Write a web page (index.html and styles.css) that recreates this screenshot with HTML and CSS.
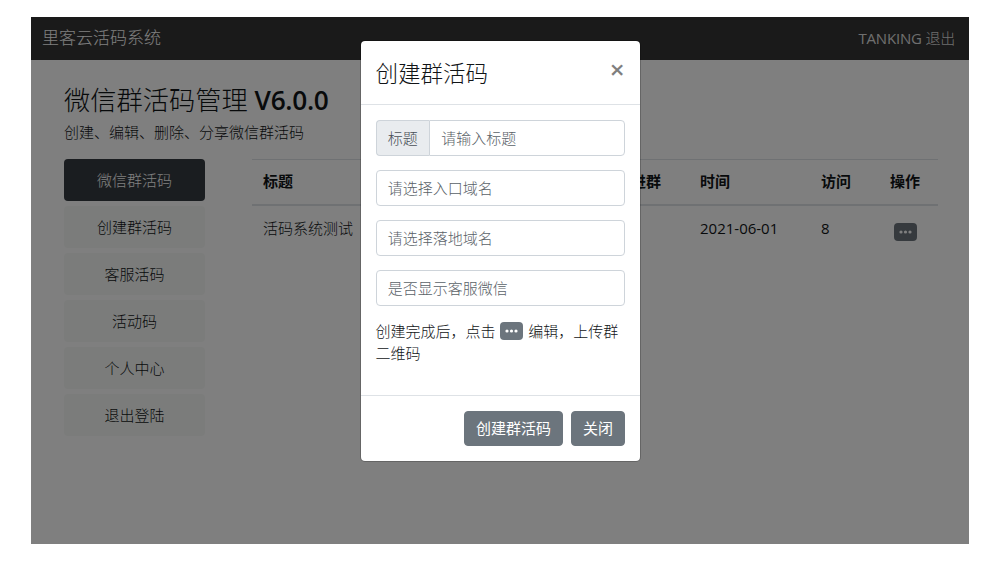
FILE: index.html
```html
<!DOCTYPE html>
<html lang="zh-CN">
<head>
<meta charset="utf-8">
<title>里客云活码系统</title>
<link rel="stylesheet" href="styles.css">
</head>
<body>
<div class="app">
  <nav class="navbar">
    <span class="brand">里客云活码系统</span>
    <span class="user"><span class="latin">TANKING</span> 退出</span>
  </nav>
  <main class="main">
    <h3 class="page-title">微信群活码管理 <span class="version">V6.0.0</span></h3>
    <p class="page-sub">创建、编辑、删除、分享微信群活码</p>
    <div class="columns">
      <ul class="side">
        <li class="side-item active">微信群活码</li>
        <li class="side-item">创建群活码</li>
        <li class="side-item">客服活码</li>
        <li class="side-item">活动码</li>
        <li class="side-item">个人中心</li>
        <li class="side-item">退出登陆</li>
      </ul>
      <table class="table">
        <colgroup>
          <col class="c-title"><col class="c-join"><col class="c-time"><col class="c-visit"><col class="c-op">
        </colgroup>
        <thead>
          <tr><th>标题</th><th>进群</th><th>时间</th><th>访问</th><th>操作</th></tr>
        </thead>
        <tbody>
          <tr>
            <td>活码系统测试</td><td></td><td class="latin">2021-06-01</td><td class="latin">8</td>
            <td><span class="more"><svg width="13" height="4" viewBox="0 0 13 4"><circle cx="2" cy="2" r="1.6"/><circle cx="6.5" cy="2" r="1.6"/><circle cx="11" cy="2" r="1.6"/></svg></span></td>
          </tr>
        </tbody>
      </table>
    </div>
  </main>
  <div class="backdrop"></div>
  <section class="modal">
    <header class="modal-head">
      <h5 class="modal-title">创建群活码</h5>
      <span class="close">×</span>
    </header>
    <div class="modal-body">
      <div class="field group">
        <span class="addon">标题</span>
        <span class="control joined">请输入标题</span>
      </div>
      <div class="field control">请选择入口域名</div>
      <div class="field control">请选择落地域名</div>
      <div class="field control">是否显示客服微信</div>
      <p class="hint">创建完成后&#65292;点击 <span class="more"><svg width="13" height="4" viewBox="0 0 13 4"><circle cx="2" cy="2" r="1.6"/><circle cx="6.5" cy="2" r="1.6"/><circle cx="11" cy="2" r="1.6"/></svg></span> 编辑&#65292;上传群二维码</p>
    </div>
    <footer class="modal-foot">
      <button class="btn">创建群活码</button>
      <button class="btn">关闭</button>
    </footer>
  </section>
</div>
</body>
</html>
```

FILE: styles.css
```css
* { box-sizing: border-box; }
html, body { margin: 0; padding: 0; background: #fff; }
body {
  padding: 17px 30px 18px 31px;
  font-family: "Open Sans", "Noto Sans CJK SC", sans-serif;
  font-size: 15px;
  font-weight: 300;
  line-height: 22.5px;
  color: #111417;
}
.latin { font-weight: 400; }
.app {
  position: relative;
  height: 527px;
  overflow: hidden;
  background: #fff;
}
.navbar {
  height: 43px;
  padding: 0 14px 0 11px;
  background: #343434;
  display: flex;
  align-items: center;
  justify-content: space-between;
}
.brand { font-size: 17px; color: #fff; }
.user { color: rgba(255,255,255,.85); letter-spacing: -.2px; }
.main { padding: 23px 31px 0 33px; }
.page-title {
  margin: 0;
  font-size: 26.25px;
  line-height: 34px;
  font-weight: 300;
}
.version { font-weight: 600; letter-spacing: -.3px; }
.page-sub { margin: 4px 0 0; height: 22.5px; }
.columns { display: flex; margin-top: 15px; gap: 47px; }
.side { list-style: none; margin: 0; padding: 0; width: 141px; display: flex; flex-direction: column; gap: 5px; flex: none; }
.side-item {
  height: 42px;
  line-height: 42px;
  text-align: center;
  border-radius: 4px;
  background: #f6f9f6;
}
.side-item.active { background: #343a40; color: #fff; }
.table { flex: 1; border-collapse: collapse; table-layout: fixed; align-self: flex-start; margin: 0; }
.c-title { width: 368px; }
.c-join { width: 69px; }
.c-time { width: 121px; }
.c-visit { width: 69px; }
.c-op { width: 59px; }
.table th {
  text-align: left;
  font-weight: 700;
  padding: 10px 11px 11px;
  height: 46px;
  border-top: 1px solid #dee2e6;
  border-bottom: 2px solid #dee2e6;
}
.table td { padding: 11px; vertical-align: top; }
.table td:last-child { padding-left: 15px; }
.more {
  display: inline-flex;
  align-items: center;
  justify-content: center;
  width: 23px;
  height: 18px;
  border-radius: 4px;
  background: #6c757d;
  vertical-align: top;
  margin-top: 2px;
}
.table .more { margin-top: 6px; }
.more svg { fill: #fff; display: block; }
.backdrop { position: absolute; inset: 0; background: rgba(0,0,0,.5); }
.modal {
  position: absolute;
  left: 328.5px;
  top: 22.5px;
  width: 281px;
  height: 422px;
  display: flex;
  flex-direction: column;
  background: #fff;
  border: 1px solid rgba(0,0,0,.2);
  border-radius: 5px;
  background-clip: padding-box;
}
.modal-head {
  height: 64px;
  flex: none;
  padding: 4px 15px 0;
  display: flex;
  justify-content: space-between;
  align-items: center;
  border-bottom: 1px solid #dee2e6;
}
.modal-title { margin: 0; font-size: 22.5px; line-height: 34px; font-weight: 300; }
.close { font-size: 26px; font-weight: 600; color: #000; opacity: .5; margin: -11px 0 0 0; line-height: 1; }
.modal-body { flex: 1; padding: 15.5px 15px 0; }
.field { margin-bottom: 14.5px; }
.control {
  display: block;
  height: 35.5px;
  padding: 6px 11.25px;
  background: #fff;
  border: 1px solid #ced4da;
  border-radius: 4px;
  color: #5a6268;
  line-height: 22px;
}
.group { display: flex; height: 35.5px; }
.addon {
  width: 53.5px;
  flex: none;
  padding: 6px 0;
  text-align: center;
  line-height: 22px;
  color: #495057;
  background: #e9ecef;
  border: 1px solid #ced4da;
  border-right: 0;
  border-radius: 4px 0 0 4px;
}
.joined { flex: 1; border-radius: 0 4px 4px 0; }
.hint { margin: 1px 0 0; line-height: 22px; word-spacing: 1px; }
.modal-foot {
  flex: none;
  height: 66px;
  padding: 15px 14.5px 0 15px;
  display: flex;
  justify-content: flex-end;
  gap: 8px;
  border-top: 1px solid #dee2e6;
}
.btn {
  height: 35.5px;
  padding: 0 11px;
  font: inherit;
  font-weight: 400;
  color: #fff;
  background: #6c757d;
  border: 1px solid #6c757d;
  border-radius: 4px;
}
```
